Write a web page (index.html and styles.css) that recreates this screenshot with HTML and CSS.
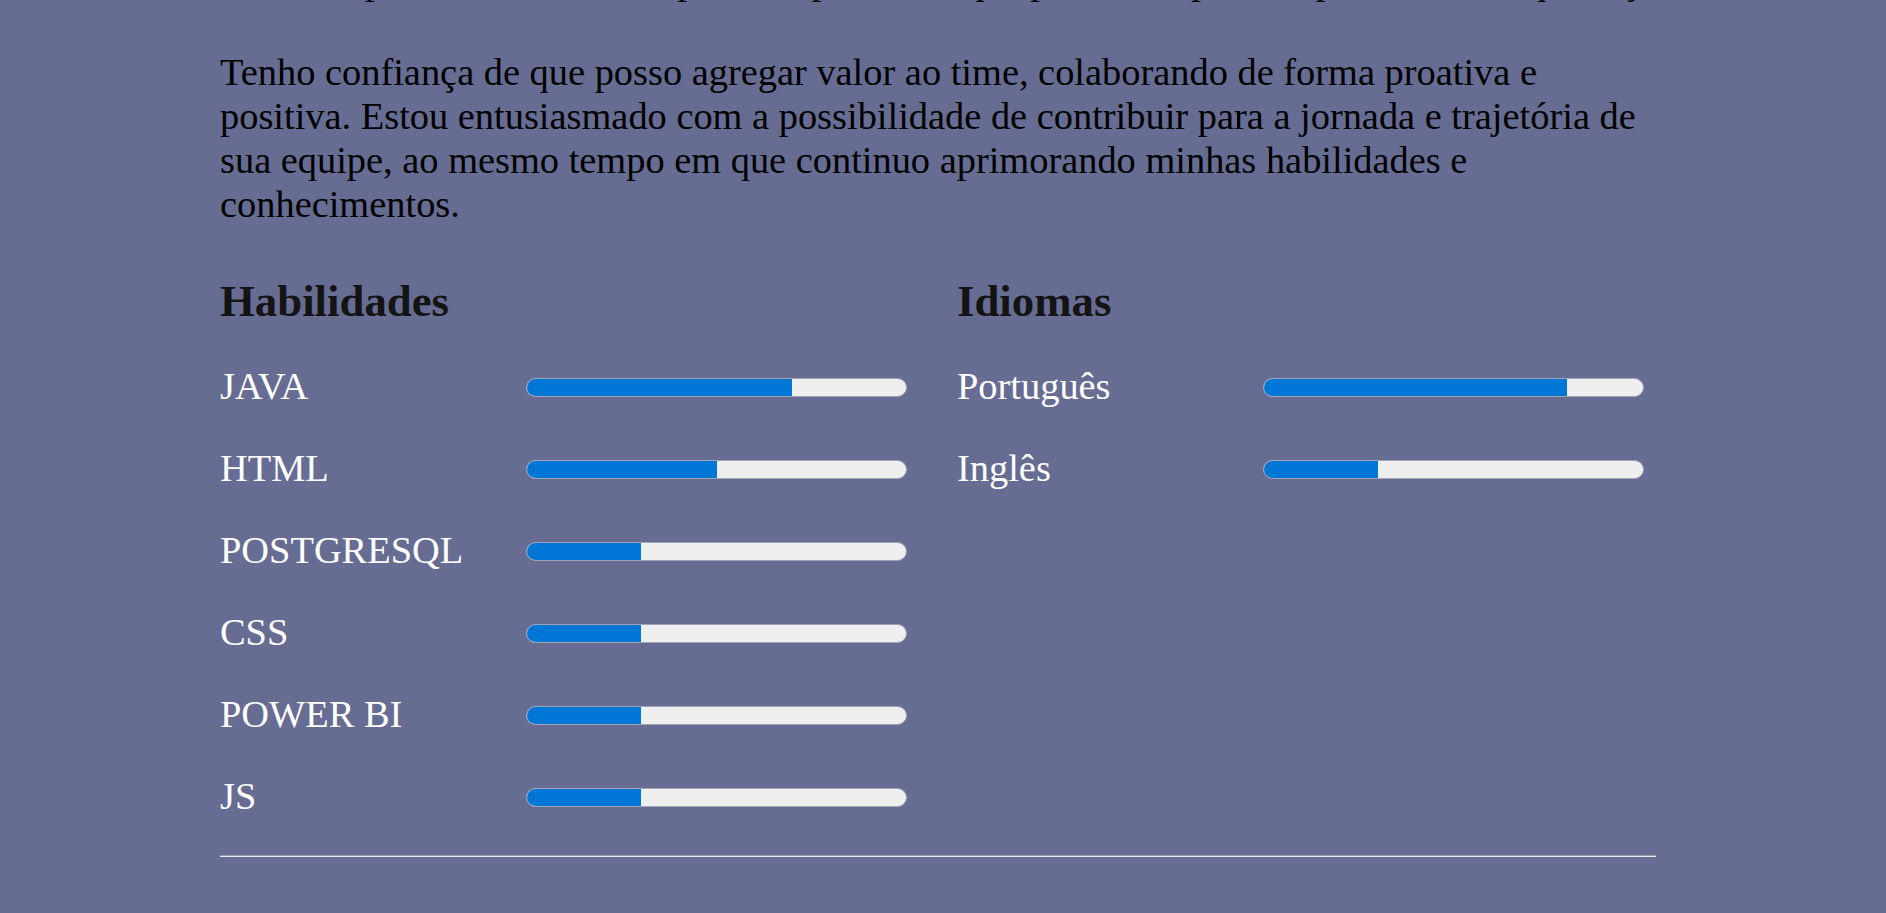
FILE: index.html
```html
<!DOCTYPE html>
<html lang="pt-BR">
<head>
<meta charset="utf-8">
<title>Currículo</title>
<link rel="stylesheet" href="styles.css">
</head>
<body>
<main class="page">
  <section class="about">
    <p class="about-prev">Sou uma pessoa dedicada, disposta a aprender e que procura superar expectativas no que faço.</p>
    <p class="about-text">Tenho confiança de que posso agregar valor ao time, colaborando de forma proativa e positiva. Estou entusiasmado com a possibilidade de contribuir para a jornada e trajetória de sua equipe, ao mesmo tempo em que continuo aprimorando minhas habilidades e conhecimentos.</p>
  </section>

  <section class="levels">
    <div class="level-col">
      <h2 class="level-title">Habilidades</h2>
      <ul class="level-list">
        <li class="level-row"><span class="level-name">JAVA</span><span class="bar"><span class="fill" style="width:70%"></span></span></li>
        <li class="level-row"><span class="level-name">HTML</span><span class="bar"><span class="fill" style="width:50%"></span></span></li>
        <li class="level-row"><span class="level-name">POSTGRESQL</span><span class="bar"><span class="fill" style="width:30%"></span></span></li>
        <li class="level-row"><span class="level-name">CSS</span><span class="bar"><span class="fill" style="width:30%"></span></span></li>
        <li class="level-row"><span class="level-name">POWER BI</span><span class="bar"><span class="fill" style="width:30%"></span></span></li>
        <li class="level-row"><span class="level-name">JS</span><span class="bar"><span class="fill" style="width:30%"></span></span></li>
      </ul>
    </div>
    <div class="level-col">
      <h2 class="level-title">Idiomas</h2>
      <ul class="level-list">
        <li class="level-row"><span class="level-name">Português</span><span class="bar"><span class="fill" style="width:80%"></span></span></li>
        <li class="level-row"><span class="level-name">Inglês</span><span class="bar"><span class="fill" style="width:30%"></span></span></li>
      </ul>
    </div>
  </section>

  <hr class="divider">
</main>
</body>
</html>
```
FILE: styles.css
```css
html, body {
  margin: 0;
  padding: 0;
}

body {
  background: #676c93;
  font-family: "Liberation Serif", "Times New Roman", serif;
  color: #000;
  overflow: hidden;
}

.page {
  margin: -41px 230px 0 220px;
  padding-bottom: 60px;
}

.about p {
  margin: 0;
  font-size: 38.4px;
  line-height: 44px;
}

.about-prev {
  white-space: nowrap;
  margin-bottom: 47px !important;
}

.about-text {
  margin-bottom: 49px !important;
}

.levels {
  display: grid;
  grid-template-columns: 686px 686px;
  column-gap: 51px;
}

.level-title {
  margin: 0 0 37px;
  font-size: 44.8px;
  line-height: 52px;
  font-weight: bold;
  color: #141414;
}

.level-list {
  list-style: none;
  margin: 0;
  padding: 0;
  display: flex;
  flex-direction: column;
  gap: 38px;
}

.level-row {
  display: flex;
  align-items: center;
  height: 44px;
}

.level-name {
  flex: 0 0 306px;
  font-size: 38.4px;
  line-height: 44px;
  color: #fff;
}

.bar {
  flex: 0 0 381px;
  height: 19px;
  box-sizing: border-box;
  border: 1px solid #a2a4b4;
  border-radius: 10px;
  background: #efefef;
  overflow: hidden;
  display: flex;
  margin-top: 3px;
}

.fill {
  display: block;
  height: 100%;
  background: #0077d6;
}

.divider {
  margin: 37px 0 0;
  height: 0;
  border: 0;
  border-top: 1px solid #9a9a9a;
  border-bottom: 1px solid #eeeeee;
}
```
